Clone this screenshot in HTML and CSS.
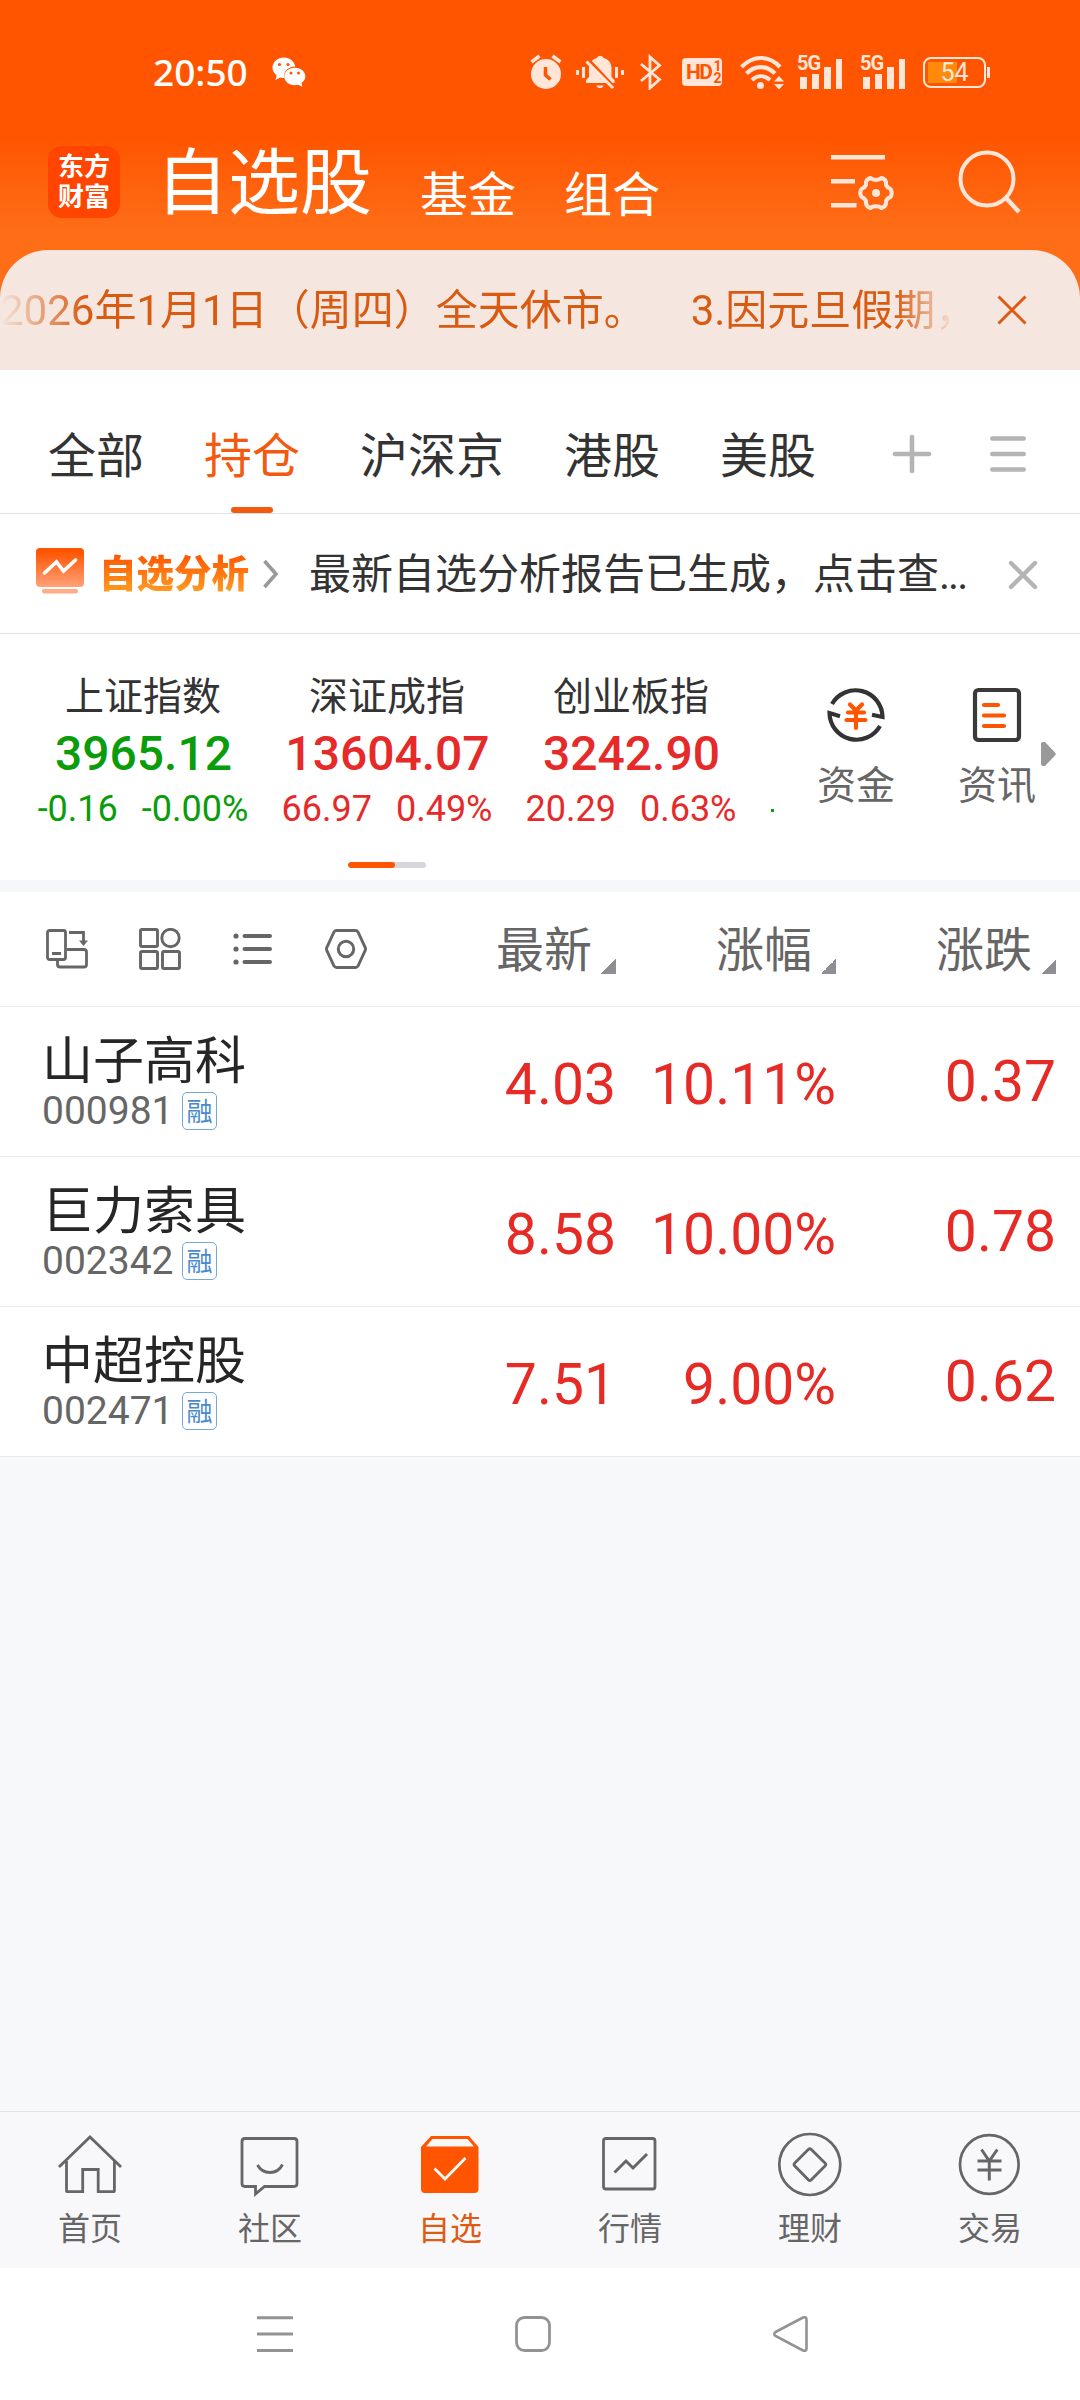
FILE: index.html
```html
<!DOCTYPE html>
<html lang="zh-CN">
<head>
<meta charset="utf-8">
<title>自选股</title>
<link rel="stylesheet" href="styles.css">
</head>
<body>
<div class="screen">
  <header class="top">
    <div class="status">
      <span class="clock">20:50</span>
      <svg class="wechat" width="34" height="30" viewBox="0 0 34 30"><path fill="#fff" d="M12 0.5C5.500.5.5 5 .5 10.600c0 3.200 1.600 6 4.200 7.900L3.500 23l4.700-2.600c1.200.4 2.500.6 4 .6C11 14.500 16 9.700 23.300 9.600 22.400 4.300 17.700.5 12 .5z"/><path fill="#fff" d="M22.800 10.800c-6 0-10.500 3.900-10.500 8.700s4.500 8.700 10.500 8.700c1.200 0 2.400-.2 3.400-.5l4.200 2-1-3.600c2.300-1.600 3.900-4 3.900-6.600 0-4.800-4.600-8.700-10.500-8.700z"/><g fill="#f50"><circle cx="7.500" cy="7.500" r="1.600"/><circle cx="16" cy="7.500" r="1.600"/><circle cx="19" cy="16" r="1.500"/><circle cx="26.500" cy="16" r="1.500"/></g></svg>
      <div class="tray">
        <svg width="32" height="36" viewBox="0 0 32 36"><circle cx="16" cy="20" r="15" fill="#ffe6d9"/><path d="M1.500 8 9.500 2M30.500 8 22.500 2" stroke="#ffe6d9" stroke-width="3.500"/><path d="M15.500 13v8l5 4.500" fill="none" stroke="#f50" stroke-width="3.500"/></svg>
        <svg class="bell" width="48" height="36" viewBox="0 0 48 36"><path fill="#ffe6d9" d="M10 29v-3l3-3v-9c0-5.500 3.500-9 8-10 .5-2.600 6-2.600 6.500 0 4.500 1 8 4.500 8 10v9l3 3v3zM20.500 31.500h7c-.5 3.400-6.500 3.400-7 0z"/><path stroke="#f50" stroke-width="3" d="M13 6 40 35"/><path stroke="#ffe6d9" stroke-width="3" d="M10.500 7.500 37 34M1.500 16v5M7.500 13v11M40.500 13v11M46.500 16v5"/></svg>
        <svg class="bt" width="24" height="36" viewBox="0 0 24 36"><path d="M2 10 20.500 25.500 11 34V3l9.500 8.500L2 27" fill="none" stroke="#ffe6d9" stroke-width="2.800"/></svg>
        <span class="hd">HD<span class="hd-n"><i>1</i><i>2</i></span></span>
        <svg class="wifi" width="44" height="36" viewBox="0 0 44 36"><g fill="none" stroke="#ffe6d9" stroke-width="4.200"><path d="M1.500 13C13 1 29 1 40 13"/><path d="M6.500 19.500c8.500-8.500 20-8.500 28.500 0"/><path d="M12 26c5.500-5 12.500-5 18 0"/></g><circle cx="20.500" cy="31.500" r="3.500" fill="#ffe6d9"/><path fill="#ffe6d9" d="M34 27.500 39 22l5 5.500zM34 30h10l-5 5.500z"/></svg>
        <span class="sig"><b>5G</b><svg width="44" height="34" viewBox="0 0 44 34"><path fill="#ffe6d9" d="M2 22h7v12H2zM14 19h7v15h-7zM26 12h7v22h-7zM38 4h6v30h-6z"/></svg></span>
        <span class="sig"><b>5G</b><svg width="44" height="34" viewBox="0 0 44 34"><path fill="#ffe6d9" d="M2 22h7v12H2zM14 19h7v15h-7zM26 12h7v22h-7zM38 4h6v30h-6z"/></svg></span>
        <span class="batt">54</span><span class="batt-tip"></span>
      </div>
    </div>
    <div class="titlebar">
      <div class="logo"><span>东方</span><span>财富</span></div>
      <h1>自选股</h1>
      <span class="sub">基金</span>
      <span class="sub">组合</span>
      <svg class="filter" width="64" height="60" viewBox="0 0 64 60"><path d="M0 5.200h54M0 29.300h24M0 53.200h25.500" stroke="#ffe6d9" stroke-width="4.500"/><path d="M39.500 26C42 28.500 48 28.500 50.500 26C54 27 55.500 29.500 55 33C56 35 57.500 36.200 59.500 37C61 39.500 61 42.500 59.500 45C57.500 45.500 56 47 55 49C55.500 52.500 54 55 50.500 56C48 53.500 42 53.500 39.500 56C36 55 34.500 52.500 35 49C34 47 32.500 45.500 30.500 45C29 42.500 29 39.500 30.500 37C32.500 36.200 34 35 35 33C34.500 29.500 36 27 39.500 26z" fill="none" stroke="#ffe6d9" stroke-width="4" stroke-linejoin="round"/><circle cx="45" cy="41" r="4" fill="#ffe6d9"/></svg>
      <svg class="search" width="64" height="64" viewBox="0 0 64 64"><circle cx="29" cy="29" r="26.500" fill="none" stroke="#ffe6d9" stroke-width="4"/><path d="M48 48l13 14" stroke="#ffe6d9" stroke-width="4.500"/></svg>
    </div>
  </header>

  <div class="notice-wrap"><div class="notice">
    <div class="marquee">2026年1月1日（周四）全天休市。<span class="gap"></span>3.因元旦假期，</div>
    <svg width="30" height="30" viewBox="0 0 30 30"><path d="M1.500 1.500l27 27M28.500 1.500l-27 27" stroke="#df5912" stroke-width="3"/></svg>
  </div></div>

  <nav class="tabs">
    <span>全部</span><span class="on">持仓</span><span>沪深京</span><span>港股</span><span>美股</span>
    <svg class="plus" width="40" height="40" viewBox="0 0 40 40"><path d="M3 20h34M20 3v34" stroke="#b4b4b4" stroke-width="4.600" stroke-linecap="round"/></svg>
    <svg class="burger" width="36" height="40" viewBox="0 0 36 40"><path d="M2.300 4.500h31.400M2.300 20h31.400M2.300 35.500h31.400" stroke="#b4b4b4" stroke-width="4.600" stroke-linecap="round"/></svg>
  </nav>

  <div class="report">
    <svg class="rep-ic" width="48" height="46" viewBox="0 0 48 46"><defs><linearGradient id="rg" x1="0" y1="0" x2="0" y2="1"><stop offset=".1" stop-color="#ff5500"/><stop offset="1" stop-color="#ffa27a"/></linearGradient></defs><rect width="48" height="39" rx="4" fill="url(#rg)"/><path d="M8.500 25 20.500 14l7 9 12-11" fill="none" stroke="#fff" stroke-width="3.600" stroke-linecap="round"/><rect x="6" y="41" width="36" height="4.500" rx="2" fill="#ffac88"/></svg>
    <span class="rep-title">自选分析</span>
    <svg class="chev" width="16" height="30" viewBox="0 0 16 30"><path d="M1.500 2 13 15 1.500 28" fill="none" stroke="#999" stroke-width="3.600"/></svg>
    <span class="rep-text">最新自选分析报告已生成，点击查<span class="dots">...</span></span>
    <svg class="rep-x" width="30" height="30" viewBox="0 0 30 30"><path d="M3 3l24 24M27 3 3 27" stroke="#b4b4b4" stroke-width="4.400" stroke-linecap="round"/></svg>
  </div>

  <section class="market">
    <div class="indices">
      <div class="idx down"><span class="nm">上证指数</span><span class="val">3965.12</span><span class="chg"><span>-0.16</span><span>-0.00%</span></span></div>
      <div class="idx up"><span class="nm">深证成指</span><span class="val">13604.07</span><span class="chg"><span>66.97</span><span>0.49%</span></span></div>
      <div class="idx up"><span class="nm">创业板指</span><span class="val">3242.90</span><span class="chg"><span>20.29</span><span>0.63%</span></span></div>
      <span class="peek"></span>
    </div>
    <div class="entry">
      <svg width="60" height="60" viewBox="0 0 60 60"><g fill="none" stroke="#333" stroke-width="4.200"><path d="M6 19A27 27 0 0 1 56.500 32L46 29.800"/><path d="M54 41A27 27 0 0 1 3.500 28L14 31.200"/></g><path d="M24 19.500l6 6 6-6M30 25.500V43M22 27.500h16M20.500 35h19" fill="none" stroke="#f50" stroke-width="4.200" stroke-linecap="round"/></svg>
      <span>资金</span>
    </div>
    <div class="entry news">
      <svg width="60" height="60" viewBox="0 0 60 60"><rect x="8" y="5" width="44" height="50" rx="3.500" fill="none" stroke="#3a3a3a" stroke-width="4.200"/><path d="M17 20h14M17 30.500h20M17 41h20" stroke="#f50" stroke-width="4.200" stroke-linecap="round"/></svg>
      <span>资讯</span>
    </div>
    <svg class="more" width="15" height="24" viewBox="0 0 15 24"><path d="M0 2q0-2 2-2h2L14 10.500q1.500 1.500 0 3L4 24H2q-2 0-2-2z" fill="#999"/></svg>
    <div class="pager"><i></i></div>
  </section>

  <section class="table">
    <div class="thead">
      <div class="tools">
        <svg width="42" height="42" viewBox="0 0 42 42"><g fill="none" stroke="#666" stroke-width="2.800"><rect x="1.500" y="2.500" width="18" height="29" rx="2"/><path d="M23 4.500h14.500v11M11.500 32v4.500q0 2.500 2.500 2.500h24q2.500 0 2.500-2.500V24q0-2.500-2.500-2.500H21M6 25.500h9"/></g><path fill="#666" d="M33 12.500h9l-4.500 5.500z"/></svg>
        <svg width="42" height="42" viewBox="0 0 42 42"><g fill="none" stroke="#666" stroke-width="2.900"><rect x="1.500" y="1.500" width="17" height="17" rx="1.500"/><circle cx="31.500" cy="10" r="8.700"/><rect x="1.500" y="23.500" width="17" height="17" rx="1.500"/><rect x="23.500" y="23.500" width="17" height="17" rx="1.500"/></g></svg>
        <svg width="42" height="42" viewBox="0 0 42 42"><path d="M12.500 8h25.500M12.500 21h25.500M12.500 34h25.500" stroke="#666" stroke-width="4" stroke-linecap="round"/><g fill="#666"><circle cx="4" cy="8" r="2.600"/><circle cx="4" cy="21" r="2.600"/><circle cx="4" cy="34" r="2.600"/></g></svg>
        <svg width="42" height="42" viewBox="0 0 42 42"><path d="M11.500 2.500h19q1.500 0 2.500 1.500l7 15q1 2 0 4l-7 15q-1 1.500-2.500 1.500h-19q-1.500 0-2.500-1.500L2 23q-1-2 0-4L9 4q1-1.500 2.500-1.500z" fill="none" stroke="#666" stroke-width="2.900"/><circle cx="21" cy="21" r="7.700" fill="none" stroke="#666" stroke-width="3"/></svg>
      </div>
      <div class="th">最新</div><div class="th">涨幅</div><div class="th">涨跌</div>
    </div>
    <div class="row"><div class="stock"><span class="name">山子高科</span><span class="code">000981</span><span class="badge">融</span></div><span class="num">4.03</span><span class="num">10.11%</span><span class="num last">0.37</span></div>
    <div class="row"><div class="stock"><span class="name">巨力索具</span><span class="code">002342</span><span class="badge">融</span></div><span class="num">8.58</span><span class="num">10.00%</span><span class="num last">0.78</span></div>
    <div class="row"><div class="stock"><span class="name">中超控股</span><span class="code">002471</span><span class="badge">融</span></div><span class="num">7.51</span><span class="num">9.00%</span><span class="num last">0.62</span></div>
  </section>

  <div class="blank"></div>

  <nav class="bottom">
    <div class="item"><svg width="66" height="66" viewBox="0 0 66 66"><path d="M2 35 33 5l31 30M9.500 29v29.500q0 1.200 1.200 1.200h15V37.500h15.500v22.200h15q1.200 0 1.200-1.200V29" fill="none" stroke="#666" stroke-width="2.800"/></svg><span>首页</span></div>
    <div class="item"><svg width="66" height="66" viewBox="0 0 66 66"><path d="M8 6.500h49q3 0 3 3v42q0 3-3 3H27.500L18.500 62v-7.500H8q-3 0-3-3v-42q0-3 3-3zM20.500 33q4 7.500 12.500 7.500T45.500 32.500" fill="none" stroke="#666" stroke-width="2.800"/></svg><span>社区</span></div>
    <div class="item on"><svg width="66" height="66" viewBox="0 0 66 66"><path fill="#f50" fill-rule="evenodd" d="M14 4h38l9.500 11v42q0 4-4 4H8q-4 0-4-4V15zM15.500 7 9 14.500h48L50.500 7z"/><path d="M17.500 36.500 28 47l20.500-21" fill="none" stroke="#fff" stroke-width="2.800"/></svg><span>自选</span></div>
    <div class="item"><svg width="66" height="66" viewBox="0 0 66 66"><rect x="6.500" y="6.500" width="51.500" height="50.500" rx="2.500" fill="none" stroke="#666" stroke-width="2.800"/><path d="M17.500 40.500 29 29l7 7 14-14" fill="none" stroke="#666" stroke-width="3"/></svg><span>行情</span></div>
    <div class="item"><svg width="66" height="66" viewBox="0 0 66 66"><circle cx="32.800" cy="32.500" r="30.500" fill="none" stroke="#666" stroke-width="2.700"/><path d="M31.300 17.500q1.500-1.500 3 0L48 31q1.500 1.500 0 3L34.300 47.800q-1.500 1.500-3 0L17.800 34q-1.500-1.500 0-3z" fill="none" stroke="#666" stroke-width="2.800"/></svg><span>理财</span></div>
    <div class="item"><svg width="66" height="66" viewBox="0 0 66 66"><circle cx="32.300" cy="32.500" r="29.300" fill="none" stroke="#666" stroke-width="2.700"/><path d="M24.500 17.500 32.300 29l8-11.500M32.300 29v19.500M20.500 29h24M20.500 38h24" fill="none" stroke="#666" stroke-width="3"/></svg><span>交易</span></div>
  </nav>

  <div class="sysnav">
    <svg width="40" height="40" viewBox="0 0 40 40"><path d="M2 3.700h36M2 20h36M2 36.500h36" stroke="#939393" stroke-width="3"/></svg>
    <svg width="40" height="40" viewBox="0 0 40 40"><rect x="3.500" y="3.500" width="33" height="33" rx="8" fill="none" stroke="#939393" stroke-width="2.800"/></svg>
    <svg width="40" height="40" viewBox="0 0 40 40"><path d="M4.500 18 32 3.500q3.500-1 3.500 2v29q0 3-3.500 2L4.500 22q-2.500-2 0-4z" fill="none" stroke="#939393" stroke-width="2.600"/></svg>
  </div>
</div>
</body>
</html>
```
FILE: styles.css
```css
* { box-sizing: border-box; }
body { margin: 0; background: #fff; font-family: "Noto Sans CJK SC", sans-serif; }
svg { display: block; flex: none; }
.screen { width: 1080px; height: 2400px; display: flex; flex-direction: column; overflow: hidden; }
.screen > * { flex: none; }

.top { height: 250px; background: linear-gradient(#ff5500 55%, #ff6d17 92%); }
.status { height: 110px; padding: 34px 90px 0 153px; display: flex; align-items: center; }
.clock { font: 500 37px/37px "Noto Sans", sans-serif; color: #fff; width: 97px; margin-top: -2px; }
.wechat { margin: -1px 0 0 22px; }
.tray { flex: 1; display: flex; align-items: center; justify-content: flex-end; color: #ffe6d9; }
.bell { margin-left: 14px; }
.bt { margin-left: 15px; }
.hd { margin-left: 19px; width: 40px; height: 28px; border-radius: 4px; background: #ffe6d9; color: #f50; font: 700 21px/28px "Roboto", sans-serif; letter-spacing: -1.500px; display: flex; align-items: center; padding-left: 4px; gap: 2px; }
.hd-n { display: grid; font-size: 14px; line-height: 12px; }
.hd-n i { font-style: normal; }
.wifi { margin-left: 18px; }
.sig { position: relative; margin-left: 14px; }
.sig + .sig { margin-left: 19px; }
.sig b { position: absolute; left: -1px; top: -2px; font: 700 20px/20px "Roboto", sans-serif; letter-spacing: -1px; }
.batt { margin-left: 18px; width: 63px; height: 31px; border: 2px solid #ffe6d9; border-radius: 8px; background: linear-gradient(90deg, #ff8a0a 29px, transparent 29px) 3px 3px / 53px 21px no-repeat; font: 400 25px/27px "Roboto", sans-serif; text-align: center; }
.batt-tip { width: 3px; height: 11px; margin-left: 1px; background: #ffe6d9; }

.titlebar { height: 105px; padding-left: 48px; display: flex; align-items: flex-end; color: #fff; }
.logo { width: 72px; height: 72px; margin-bottom: -3px; border-radius: 14px; background: #ff4500; display: grid; place-content: center; font-weight: 700; font-size: 26px; line-height: 30px; padding-bottom: 4px; }
.logo span { height: 30px; }
h1 { margin: 0 0 2px 36px; font-size: 72px; line-height: 72px; font-weight: 400; }
.sub { font-size: 48px; line-height: 48px; margin-left: 48px; }
.sub + .sub { margin-left: 48px; }
.filter { margin: 0 0 3px 171px; }
.search { margin: 0 0 1px 63px; }

.notice-wrap { background: #ff6d17; }
.notice { height: 120px; background: #f5e7e0; border-radius: 48px 48px 0 0; display: flex; align-items: center; justify-content: space-between; padding: 0 53px 0 0; overflow: hidden; }
.marquee { width: 960px; height: 60px; margin-top: 2px; overflow: hidden; white-space: nowrap; font: 400 42px/60px "Roboto", "Noto Sans CJK SC", sans-serif; color: #d95b12; -webkit-mask-image: linear-gradient(90deg, transparent, #000 85px, #000 895px, transparent 955px); mask-image: linear-gradient(90deg, transparent, #000 85px, #000 895px, transparent 955px); }
.gap { display: inline-block; width: 45px; }

.tabs { height: 144px; border-bottom: 1px solid #e2e2e2; padding: 24px 54px 0 48px; display: flex; align-items: center; gap: 60px; font-size: 48px; line-height: 119px; color: #333; }
.tabs span { margin-top: -1px; height: 120px; }
.tabs .on { position: relative; color: #f15a0f; }
.tabs .on::after { content: ""; position: absolute; left: 27px; bottom: 0; width: 42px; height: 6px; border-radius: 3px; background: #f15a0f; }
.plus { margin-left: auto; }
.burger { margin-left: -2px; }

.report { height: 120px; border-bottom: 1px solid #e2e2e2; padding: 0 42px 0 36px; display: flex; align-items: center; }
.rep-ic { margin-top: -6px; }
.rep-title { margin: -6px 0 0 15px; width: 150px; white-space: nowrap; font-size: 37.500px; line-height: 48px; font-weight: 900; background: linear-gradient(#ff5500 15%, #ff981f 90%); -webkit-background-clip: text; background-clip: text; color: transparent; }
.chev { margin-left: 14px; }
.rep-text { margin: 3px 0 0 30px; height: 60px; white-space: nowrap; font: 400 42px/60px "Roboto", "Noto Sans CJK SC", sans-serif; color: #333; }
.dots { letter-spacing: -2px; }
.rep-x { margin: 2px 0 0 auto; }

.market { position: relative; height: 246px; padding-left: 21px; display: flex; }
.indices { width: 753px; display: flex; overflow: hidden; }
.idx { width: 244px; flex: none; display: flex; flex-direction: column; align-items: center; padding-top: 34px; white-space: nowrap; }
.nm { font-size: 39px; line-height: 50px; color: #333; }
.val { font: 500 48px/56px "Roboto", sans-serif; margin: 8px 0 0 1px; }
.chg { font: 400 36px/42px "Roboto", sans-serif; margin-top: 6px; display: flex; gap: 24px; }
.down { color: #0a9c0a; }
.up { color: #e62a2a; }
.peek { width: 3px; height: 3px; flex: none; margin: 175px 0 0 18px; background: #0a9c0a; }
.entry { width: 140px; margin-left: 12px; display: flex; flex-direction: column; align-items: center; padding-top: 51px; font-size: 39px; line-height: 50px; color: #666; gap: 12px; }
.news { margin-left: 1px; }
.more { margin: 108px 0 0 -26px; }
.pager { position: absolute; left: 348px; bottom: 12px; width: 78px; height: 6px; border-radius: 3px; background: #d5d7dd; overflow: hidden; }
.pager i { display: block; width: 47px; height: 6px; border-radius: 3px; background: #f50; }

.table { border-top: 12px solid #f5f7fa; }
.thead { height: 115px; border-bottom: 1px solid #e9e9e9; padding: 0 24px 0 46px; display: flex; align-items: center; }
.tools { flex: 1; display: flex; gap: 51px; }
.th { width: 220px; display: flex; justify-content: flex-end; align-items: flex-end; gap: 9px; font-size: 48px; line-height: 60px; color: #666; margin-top: -6px; }
.th::after { content: ""; width: 15px; height: 15px; margin-bottom: 2px; background: linear-gradient(135deg, transparent 50%, #8e8e93 50%); }
.row { height: 150px; border-bottom: 1px solid #e9e9e9; padding: 0 24px 0 42px; display: flex; align-items: center; }
.stock { width: 354px; display: flex; flex-wrap: wrap; align-items: center; row-gap: 4px; padding-top: 1px; }
.name { width: 100%; font-size: 51px; line-height: 54px; color: #262626; }
.code { font: 400 39px/46px "Roboto", sans-serif; color: #666; width: 140px; }
.badge { width: 35px; height: 38px; border: 1.500px solid #76a9d8; border-radius: 5px; font-size: 26px; line-height: 34px; text-align: center; color: #4a8acb; }
.num { width: 220px; text-align: right; font: 400 57px/66px "Roboto", sans-serif; color: #e62a26; margin-top: 6px; }
.row .stock + .num { margin-left: auto; }
.last { margin-top: 0; }

.blank { height: 654px; background: #f7f8fa; }
.bottom { height: 157px; background: #f8f8fb; border-top: 1px solid #e3e4e6; display: grid; grid-template-columns: repeat(6, 1fr); }
.item { display: flex; flex-direction: column; align-items: center; padding-top: 20px; font-size: 32px; line-height: 40px; color: #666; gap: 8px; }
.item.on { color: #df5a12; }
.sysnav { height: 132px; background: #fff; display: flex; justify-content: center; gap: 218px; padding: 46px 14px 0 0; }
```
